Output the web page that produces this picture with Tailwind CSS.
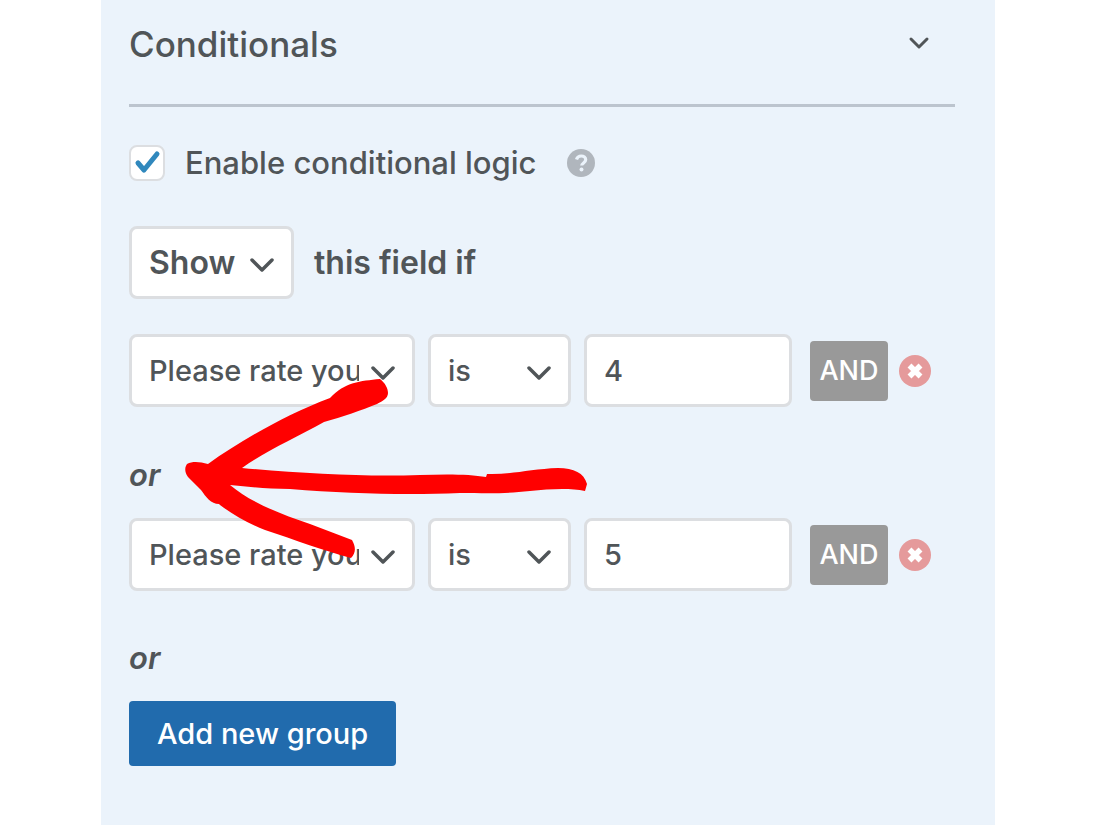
<!DOCTYPE html>
<html lang="en">
<head>
  <meta charset="UTF-8" />
  <meta name="viewport" content="width=device-width, initial-scale=1.0"/>
  <title>Conditionals</title>
  <script src="https://cdn.jsdelivr.net/npm/@tailwindcss/browser@4"></script>
</head>
<body class="bg-white font-[Inter,'Liberation_Sans',sans-serif] text-[29px] font-medium leading-10 text-[#505558]">
  <main class="relative ml-[101px] mr-[121px] bg-[#ebf3fb] pl-7 pr-10 pb-[59px]">

    <!-- Section header -->
    <header class="flex items-center justify-between border-b-3 border-[#bcc4ce] pt-5 pb-9 pr-6">
      <h1 class="text-[35px] leading-12">Conditionals</h1>
      <button type="button" aria-label="Collapse section">
        <svg class="w-6 h-6" viewBox="0 0 24 24" fill="none" stroke="currentColor" stroke-width="3" stroke-linecap="round" stroke-linejoin="round"><path d="M4 7l8 8 8-8"/></svg>
      </button>
    </header>

    <!-- Enable toggle -->
    <div class="mt-9 flex items-center text-[31px]">
      <span class="relative flex">
        <input id="enable" type="checkbox" checked class="peer size-9 appearance-none rounded-lg border-2 border-[#dcdee1] bg-white"/>
        <svg class="pointer-events-none absolute inset-0 hidden size-9 peer-checked:block" viewBox="0 0 36 36" fill="none" stroke="#3088bd" stroke-width="5" stroke-linecap="round" stroke-linejoin="round"><path d="M9 18l6 7L28 9"/></svg>
      </span>
      <label for="enable" class="ml-5">Enable conditional logic</label>
      <button type="button" aria-label="Help" class="ml-[30px]">
        <svg class="size-7" viewBox="0 0 28 28" fill="none"><circle cx="14" cy="14" r="14" fill="#b0b6bd"/><path d="M9.5 10.5C10.3 8 12 7 14.2 7c2.600 0 4.500 1.500 4.500 3.800 0 3-4 3.200-4 5.700" stroke="#ebf3fb" stroke-width="3.200"/><circle cx="14.500" cy="20.500" r="2" fill="#ebf3fb"/></svg>
      </button>
    </div>

    <div class="mt-[43px] flex items-center text-[32px] font-semibold">
      <span class="relative w-[165px]">
        <select aria-label="Action" class="block h-[73px] w-full appearance-none rounded-lg border-3 border-[#dcdee1] bg-white pl-[17px] pr-12"><option>Show</option><option>Hide</option></select>
        <svg class="pointer-events-none absolute right-5 top-6 size-6" viewBox="0 0 24 24" fill="none" stroke="currentColor" stroke-width="3.500" stroke-linecap="round" stroke-linejoin="round"><path d="M2 10l10 10 10-10"/></svg>
      </span>
      <span class="ml-5">this field if</span>
    </div>

    <!-- Rule group 1 -->
    <div class="mt-[35px] flex items-center pr-6">
      <div class="grid flex-1 grid-cols-[286fr_143fr_208fr] gap-[13px]">
        <span class="relative">
          <select aria-label="Field" class="block h-[73px] w-full appearance-none rounded-lg border-3 border-[#dcdee1] bg-white pl-[17px] pr-[53px]"><option>Please rate your experience</option></select>
          <svg class="pointer-events-none absolute right-5 top-6 size-6" viewBox="0 0 24 24" fill="none" stroke="currentColor" stroke-width="3.500" stroke-linecap="round" stroke-linejoin="round"><path d="M2 10l10 10 10-10"/></svg>
        </span>
        <span class="relative">
          <select aria-label="Operator" class="block h-[73px] w-full appearance-none rounded-lg border-3 border-[#dcdee1] bg-white pl-[17px] pr-14"><option>is</option><option>is not</option></select>
          <svg class="pointer-events-none absolute right-5 top-6 size-6" viewBox="0 0 24 24" fill="none" stroke="currentColor" stroke-width="3.500" stroke-linecap="round" stroke-linejoin="round"><path d="M2 10l10 10 10-10"/></svg>
        </span>
        <input type="text" aria-label="Value" value="4" class="h-[73px] w-full min-w-0 rounded-lg border-3 border-[#dcdee1] bg-white px-[17px]"/>
      </div>
      <button type="button" class="ml-[18px] h-[60px] w-[78px] rounded bg-[#999] text-[27px] text-white">AND</button>
      <button type="button" aria-label="Remove rule" class="ml-[11px]">
        <svg class="size-8" viewBox="0 0 32 32"><circle cx="16" cy="16" r="16" fill="#e59a9b"/><path d="M10.500 10.500l11 11M21.500 10.500l-11 11" stroke="#fff" stroke-width="5.500"/></svg>
      </button>
    </div>

    <p class="mt-12 mb-[23px] text-[31px] font-semibold italic">or</p>

    <!-- Rule group 2 -->
    <div class="flex items-center pr-6">
      <div class="grid flex-1 grid-cols-[286fr_143fr_208fr] gap-[13px]">
        <span class="relative">
          <select aria-label="Field" class="block h-[73px] w-full appearance-none rounded-lg border-3 border-[#dcdee1] bg-white pl-[17px] pr-[53px]"><option>Please rate your experience</option></select>
          <svg class="pointer-events-none absolute right-5 top-6 size-6" viewBox="0 0 24 24" fill="none" stroke="currentColor" stroke-width="3.500" stroke-linecap="round" stroke-linejoin="round"><path d="M2 10l10 10 10-10"/></svg>
        </span>
        <span class="relative">
          <select aria-label="Operator" class="block h-[73px] w-full appearance-none rounded-lg border-3 border-[#dcdee1] bg-white pl-[17px] pr-14"><option>is</option><option>is not</option></select>
          <svg class="pointer-events-none absolute right-5 top-6 size-6" viewBox="0 0 24 24" fill="none" stroke="currentColor" stroke-width="3.500" stroke-linecap="round" stroke-linejoin="round"><path d="M2 10l10 10 10-10"/></svg>
        </span>
        <input type="text" aria-label="Value" value="5" class="h-[73px] w-full min-w-0 rounded-lg border-3 border-[#dcdee1] bg-white px-[17px]"/>
      </div>
      <button type="button" class="ml-[18px] h-[60px] w-[78px] rounded bg-[#999] text-[27px] text-white">AND</button>
      <button type="button" aria-label="Remove rule" class="ml-[11px]">
        <svg class="size-8" viewBox="0 0 32 32"><circle cx="16" cy="16" r="16" fill="#e59a9b"/><path d="M10.500 10.500l11 11M21.500 10.500l-11 11" stroke="#fff" stroke-width="5.500"/></svg>
      </button>
    </div>

    <p class="mt-[47px] mb-[23px] text-[31px] font-semibold italic">or</p>
    <button type="button" class="h-[65px] rounded bg-[#216bad] px-7 text-white">Add new group</button>

    <!-- Hand-drawn arrow pointing at the first "or" -->
    <svg class="pointer-events-none absolute left-[84px] top-[378px] h-[182px] w-[404px]" viewBox="185 378 404 182" fill="#f00">
      <path d="M187 464C193 461 200 462 208 464C240 441 285 415 330 398C345 382 360 381 380 379C385 383 388 388 388 393C388 398 383 401 377 404C362 410 342 417 324 422C295 438 264 452 242 468C305 474 370 477 420 475C445 474 470 474 486 477L487 474C510 475 530 469 558 468C574 468 584 473 587 484L585 491C570 488 550 489 530 491C505 494 485 493 460 493C410 495 350 494 290 489C268 489 250 487 230 485C250 502 280 514 310 524L352 540C356 547 356 553 351 558C325 551 295 540 265 530C247 523 232 514 220 505L219 504C211 504 206 497 201 490L188 477C184 471 185 467 187 464Z"/>
    </svg>
  </main>
</body>
</html>
